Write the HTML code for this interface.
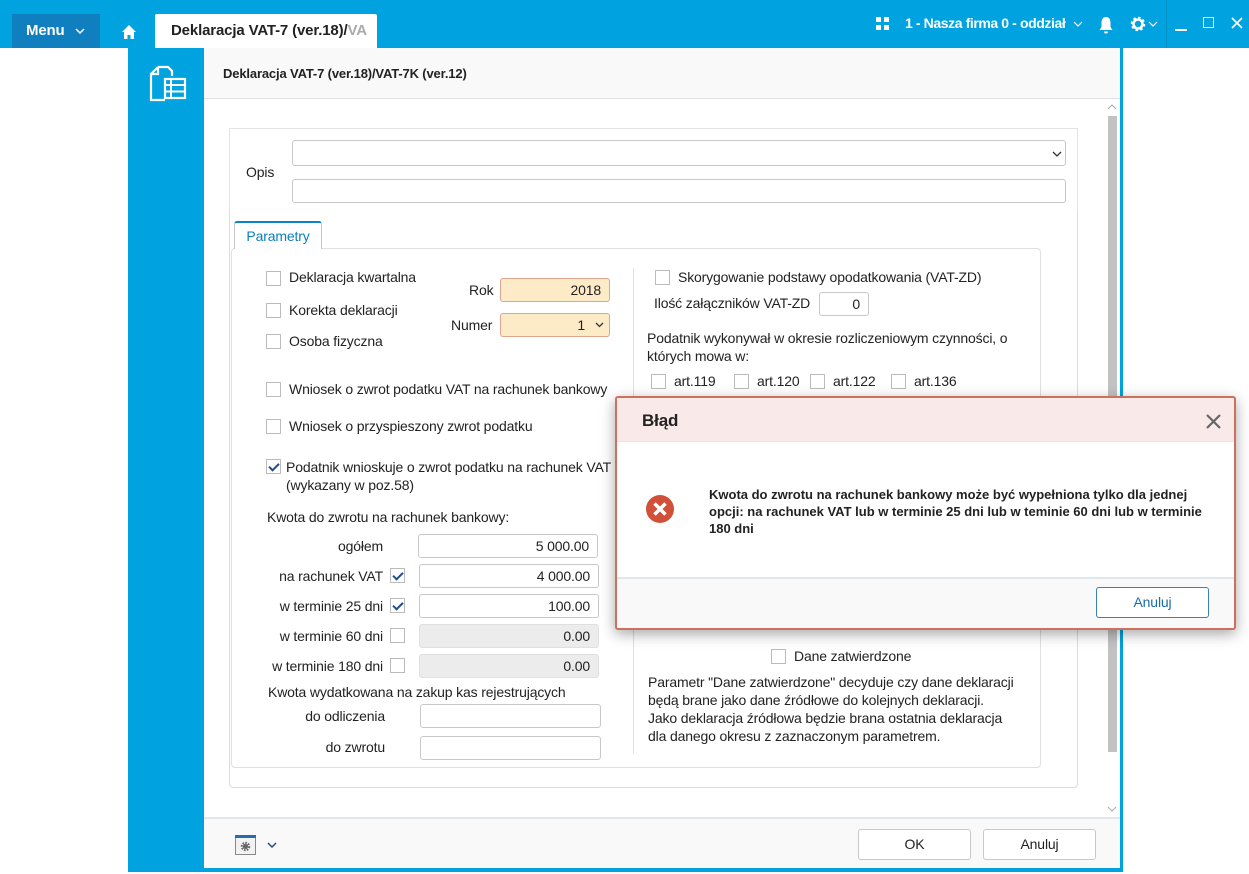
<!DOCTYPE html><html><head><meta charset="utf-8"><style>
*{box-sizing:border-box;margin:0;padding:0}
body{width:1249px;height:874px;position:relative;overflow:hidden;background:#fff;font-family:"Liberation Sans",sans-serif;font-size:14px;color:#222;letter-spacing:-0.15px}
.a{position:absolute}
.cb{position:absolute;width:15px;height:15px;border:1px solid #bbb;background:#fff}
.cb.on::after{content:"";position:absolute;left:4px;top:1px;width:4px;height:8px;border:solid #1f4e8c;border-width:0 2px 2px 0;transform:rotate(45deg)}
.in{position:absolute;border:1px solid #c8c8c8;border-radius:3px;background:#fff;text-align:right;padding-right:8px;line-height:22px;font-size:14px}
.in.dis{background:#ececec;border-color:#e0e0e0}
.lbl{position:absolute;font-size:14px;white-space:nowrap}
.r{text-align:right}
.btn{position:absolute;border:1px solid #c8c8c8;border-radius:3px;background:#fff;text-align:center;font-size:14px}
</style></head><body>
<!-- top bar -->
<div class="a" style="left:0;top:0;width:1249px;height:48px;background:#00a3e0"></div>
<div class="a" style="left:12px;top:14px;width:88px;height:34px;background:#0f7fc0;color:#fff;font-weight:bold;font-size:15px;line-height:34px;padding-left:14px">Menu</div>
<svg class="a" style="left:75px;top:28px" width="10" height="6"><path d="M1 1 L5 5 L9 1" fill="none" stroke="#fff" stroke-width="1.5"/></svg>
<svg class="a" style="left:121px;top:24px" width="16" height="16" viewBox="0 0 16 16"><path d="M8 1 L15 8 H13 V15 H9.5 V11 H6.5 V15 H3 V8 H1 Z" fill="#fff"/></svg>
<div class="a" style="left:155px;top:14px;width:222px;height:34px;background:#fff;border-radius:2px 2px 0 0;font-weight:bold;font-size:15px;line-height:34px;padding-left:16px;white-space:nowrap;overflow:hidden">Deklaracja VAT-7 (ver.18)/<span style="color:#aaa">VA</span></div>
<svg class="a" style="left:876px;top:17px" width="14" height="14"><rect x="0" y="0" width="5" height="5" fill="#fff"/><rect x="8" y="0" width="5" height="5" fill="#fff"/><rect x="0" y="8" width="5" height="5" fill="#fff"/><rect x="8" y="8" width="5" height="5" fill="#fff"/></svg>
<div class="a" style="left:905px;top:15px;color:#fff;font-weight:bold;font-size:14px;letter-spacing:-0.4px">1 - Nasza firma 0 - oddział</div>
<svg class="a" style="left:1073px;top:21px" width="10" height="6"><path d="M1 1 L5 5 L9 1" fill="none" stroke="#fff" stroke-width="1.2"/></svg>
<svg class="a" style="left:1098px;top:16px" width="16" height="18" viewBox="0 0 16 18"><path d="M8 1 C4.5 1 3.5 4 3.5 7 V11 L1.5 14 H14.5 L12.5 11 V7 C12.5 4 11.5 1 8 1Z M6 15.5 H10 A2 2 0 0 1 6 15.5Z" fill="#fff"/></svg>
<svg class="a" style="left:1129px;top:15px" width="18" height="18" viewBox="0 0 18 18"><circle cx="9" cy="9" r="5.5" fill="none" stroke="#fff" stroke-width="3.5" stroke-dasharray="2.2 2.1"/><circle cx="9" cy="9" r="4.5" fill="none" stroke="#fff" stroke-width="2.5"/></svg>
<svg class="a" style="left:1148px;top:21px" width="10" height="6"><path d="M1 1 L5 5 L9 1" fill="none" stroke="#fff" stroke-width="1.2"/></svg>
<div class="a" style="left:1166px;top:0;width:1px;height:48px;background:#0090c8"></div>
<div class="a" style="left:1175px;top:29px;width:12px;height:2px;background:#fff"></div>
<div class="a" style="left:1203px;top:17px;width:11px;height:11px;border:1.5px solid #fff"></div>
<svg class="a" style="left:1231px;top:17px" width="12" height="12"><path d="M1 1 L11 11 M11 1 L1 11" stroke="#fff" stroke-width="1.6"/></svg>
<!-- window -->
<div class="a" style="left:128px;top:48px;width:76px;height:824px;background:#00a3e0"></div>
<div class="a" style="left:128px;top:868px;width:995px;height:4px;background:#00a3e0"></div>
<div class="a" style="left:1120px;top:48px;width:3px;height:824px;background:#00a3e0"></div>
<svg class="a" style="left:148px;top:64px" width="40" height="38" viewBox="0 0 40 38"><path d="M10 3 H20 L24 7 V12 M10 3 V10 H3 V36 H17 M3 10 L10 3" fill="none" stroke="#fff" stroke-width="2.2"/><rect x="17" y="15" width="20" height="19" fill="none" stroke="#fff" stroke-width="2.2"/><path d="M17 21 H37 M17 27.5 H37 M23 15 V34" stroke="#fff" stroke-width="2"/></svg>
<div class="a" style="left:204px;top:48px;width:916px;height:51px;background:#f9f9f9;border-bottom:1px solid #e0e0e0"></div>
<div class="a" style="left:223px;top:66px;font-weight:bold;font-size:13px">Deklaracja VAT-7 (ver.18)/VAT-7K (ver.12)</div>
<!-- scrollbar -->
<div class="a" style="left:1108px;top:116px;width:9px;height:636px;background:#c2c2c2"></div>
<svg class="a" style="left:1107px;top:104px" width="10" height="6"><path d="M1 5 L5 1 L9 5" fill="none" stroke="#aaa"/></svg>
<svg class="a" style="left:1107px;top:806px" width="10" height="6"><path d="M1 1 L5 5 L9 1" fill="none" stroke="#aaa"/></svg>
<!-- outer content panel -->
<div class="a" style="left:229px;top:128px;width:849px;height:84px;border:1px solid #e3e3e3;border-bottom:none"></div>
<div class="lbl" style="left:246px;top:164px">Opis</div>
<div class="a" style="left:292px;top:140px;width:774px;height:26px;border:1px solid #c8c8c8;border-radius:3px"></div>
<svg class="a" style="left:1052px;top:151px" width="10" height="6"><path d="M1 1 L5 5 L9 1" fill="none" stroke="#333" stroke-width="1.3"/></svg>
<div class="a" style="left:292px;top:179px;width:774px;height:24px;border:1px solid #c8c8c8;border-radius:3px"></div>
<div class="a" style="left:229px;top:212px;width:849px;height:576px;border:1px solid #dcdcdc;border-top:none;border-radius:0 0 4px 4px"></div>
<div class="a" style="left:234px;top:221px;width:88px;height:28px;border:1px solid #c8c8c8;border-top:2px solid #0a84c6;border-bottom:none;background:#fff;border-radius:3px 3px 0 0;color:#0a7fc0;font-size:14px;line-height:26px;text-align:center;z-index:2">Parametry</div>
<div class="a" style="left:231px;top:248px;width:810px;height:520px;border:1px solid #e0e0e0;border-radius:4px"></div>
<div class="a" style="left:633px;top:268px;width:1px;height:486px;background:#e0e0e0"></div>
<!-- left col -->
<div class="cb" style="left:266px;top:271px"></div><div class="lbl" style="left:289px;top:269px">Deklaracja kwartalna</div>
<div class="cb" style="left:266px;top:303px"></div><div class="lbl" style="left:289px;top:302px">Korekta deklaracji</div>
<div class="cb" style="left:266px;top:334px"></div><div class="lbl" style="left:289px;top:333px">Osoba fizyczna</div>
<div class="lbl" style="left:469px;top:282px">Rok</div>
<div class="in" style="left:500px;top:278px;width:110px;height:24px;background:#fdebc8;border-color:#e0a58c">2018</div>
<div class="lbl" style="left:451px;top:317px">Numer</div>
<div class="in" style="left:500px;top:313px;width:110px;height:24px;background:#fdebc8;border-color:#e0a58c;padding-right:24px">1</div>
<svg class="a" style="left:595px;top:322px" width="9" height="6"><path d="M1 1 L4.5 4.5 L8 1" fill="none" stroke="#333" stroke-width="1.3"/></svg>
<div class="cb" style="left:266px;top:382px"></div><div class="lbl" style="left:289px;top:381px">Wniosek o zwrot podatku VAT na rachunek bankowy</div>
<div class="cb" style="left:266px;top:419px"></div><div class="lbl" style="left:289px;top:418px">Wniosek o przyspieszony zwrot podatku</div>
<div class="cb on" style="left:266px;top:459px"></div><div class="lbl" style="left:286px;top:458px;line-height:18px">Podatnik wnioskuje o zwrot podatku na rachunek VAT<br>(wykazany w poz.58)</div>
<div class="lbl" style="left:267px;top:509px">Kwota do zwrotu na rachunek bankowy:</div>
<div class="lbl r" style="left:250px;width:133px;top:538px">ogółem</div>
<div class="in" style="left:418px;top:534px;width:180px;height:24px">5 000.00</div>
<div class="lbl r" style="left:250px;width:133px;top:568px">na rachunek VAT</div><div class="cb on" style="left:390px;top:568px"></div>
<div class="in" style="left:419px;top:564px;width:180px;height:24px">4 000.00</div>
<div class="lbl r" style="left:250px;width:133px;top:598px">w terminie 25 dni</div><div class="cb on" style="left:390px;top:598px"></div>
<div class="in" style="left:419px;top:594px;width:180px;height:24px">100.00</div>
<div class="lbl r" style="left:250px;width:133px;top:628px">w terminie 60 dni</div><div class="cb" style="left:390px;top:628px"></div>
<div class="in dis" style="left:419px;top:624px;width:180px;height:24px">0.00</div>
<div class="lbl r" style="left:250px;width:133px;top:658px">w terminie 180 dni</div><div class="cb" style="left:390px;top:658px"></div>
<div class="in dis" style="left:419px;top:654px;width:180px;height:24px">0.00</div>
<div class="lbl" style="left:268px;top:684px">Kwota wydatkowana na zakup kas rejestrujących</div>
<div class="lbl r" style="left:250px;width:135px;top:708px">do odliczenia</div>
<div class="in" style="left:420px;top:704px;width:181px;height:24px"></div>
<div class="lbl r" style="left:250px;width:135px;top:739px">do zwrotu</div>
<div class="in" style="left:420px;top:736px;width:181px;height:24px"></div>
<!-- right col -->
<div class="cb" style="left:655px;top:270px"></div><div class="lbl" style="left:678px;top:269px">Skorygowanie podstawy opodatkowania (VAT-ZD)</div>
<div class="lbl" style="left:654px;top:295px">Ilość załączników VAT-ZD</div>
<div class="in" style="left:819px;top:292px;width:50px;height:24px">0</div>
<div class="lbl" style="left:647px;top:329px;line-height:18px">Podatnik wykonywał w okresie rozliczeniowym czynności, o<br>których mowa w:</div>
<div class="cb" style="left:651px;top:374px"></div><div class="lbl" style="left:674px;top:373px">art.119</div>
<div class="cb" style="left:734px;top:374px"></div><div class="lbl" style="left:757px;top:373px">art.120</div>
<div class="cb" style="left:810px;top:374px"></div><div class="lbl" style="left:833px;top:373px">art.122</div>
<div class="cb" style="left:891px;top:374px"></div><div class="lbl" style="left:914px;top:373px">art.136</div>
<div class="cb" style="left:771px;top:649px"></div><div class="lbl" style="left:794px;top:648px">Dane zatwierdzone</div>
<div class="lbl" style="left:648px;top:673px;line-height:18px">Parametr "Dane zatwierdzone" decyduje czy dane deklaracji<br>będą brane jako dane źródłowe do kolejnych deklaracji.<br>Jako deklaracja źródłowa będzie brana ostatnia deklaracja<br>dla danego okresu z zaznaczonym parametrem.</div>
<!-- footer -->
<div class="a" style="left:204px;top:817px;width:916px;height:51px;background:#f9f9f9;border-top:2px solid #dde8ee"></div>
<svg class="a" style="left:235px;top:835px" width="22" height="20" viewBox="0 0 22 20"><rect x="0.5" y="0.5" width="20" height="19" fill="#f2f2f2" stroke="#888"/><rect x="0" y="0" width="21" height="3" fill="#2a6bb0"/><circle cx="10.5" cy="11.5" r="3.5" fill="none" stroke="#666" stroke-width="2.5" stroke-dasharray="1.5 1.2"/><circle cx="10.5" cy="11.5" r="2.5" fill="#666"/></svg>
<svg class="a" style="left:267px;top:842px" width="10" height="6"><path d="M1 1 L5 5 L9 1" fill="none" stroke="#1f4e8c" stroke-width="1.5"/></svg>
<div class="btn" style="left:858px;top:829px;width:113px;height:31px;line-height:29px">OK</div>
<div class="btn" style="left:983px;top:829px;width:113px;height:31px;line-height:29px">Anuluj</div>
<!-- dialog -->
<div class="a" style="left:615px;top:396px;width:621px;height:234px;border:2px solid #cf6f5d;border-radius:3px;background:#fff;box-shadow:0 4px 14px rgba(0,0,0,.35);overflow:hidden">
 <div class="a" style="left:0;top:0;width:617px;height:44px;background:#f9e9e8;border-bottom:1px solid #e0e6ea"></div>
 <div class="a" style="left:25px;top:13px;font-weight:bold;font-size:17px">Błąd</div>
 <svg class="a" style="left:589px;top:16px" width="15" height="15"><path d="M1 1 L14 14 M14 1 L1 14" stroke="#666" stroke-width="2.2"/></svg>
 <svg class="a" style="left:27px;top:95px" width="32" height="32"><circle cx="16" cy="16" r="14" fill="#d0503a"/><path d="M10.5 10.5 L21.5 21.5 M21.5 10.5 L10.5 21.5" stroke="#fff" stroke-width="3.5"/></svg>
 <div class="a" style="left:92px;top:88px;width:505px;font-weight:bold;font-size:13px;line-height:17px;letter-spacing:0">Kwota do zwrotu na rachunek bankowy może być wypełniona tylko dla jednej opcji: na rachunek VAT lub w terminie 25 dni lub w teminie 60 dni lub w terminie 180 dni</div>
 <div class="a" style="left:0;top:179px;width:617px;height:55px;background:#f9f9f9;border-top:2px solid #dde8ee"></div>
 <div class="btn" style="left:479px;top:189px;width:113px;height:31px;line-height:29px;border-color:#3a7fb5;color:#1a6aa8">Anuluj</div>
</div>
</body></html>
